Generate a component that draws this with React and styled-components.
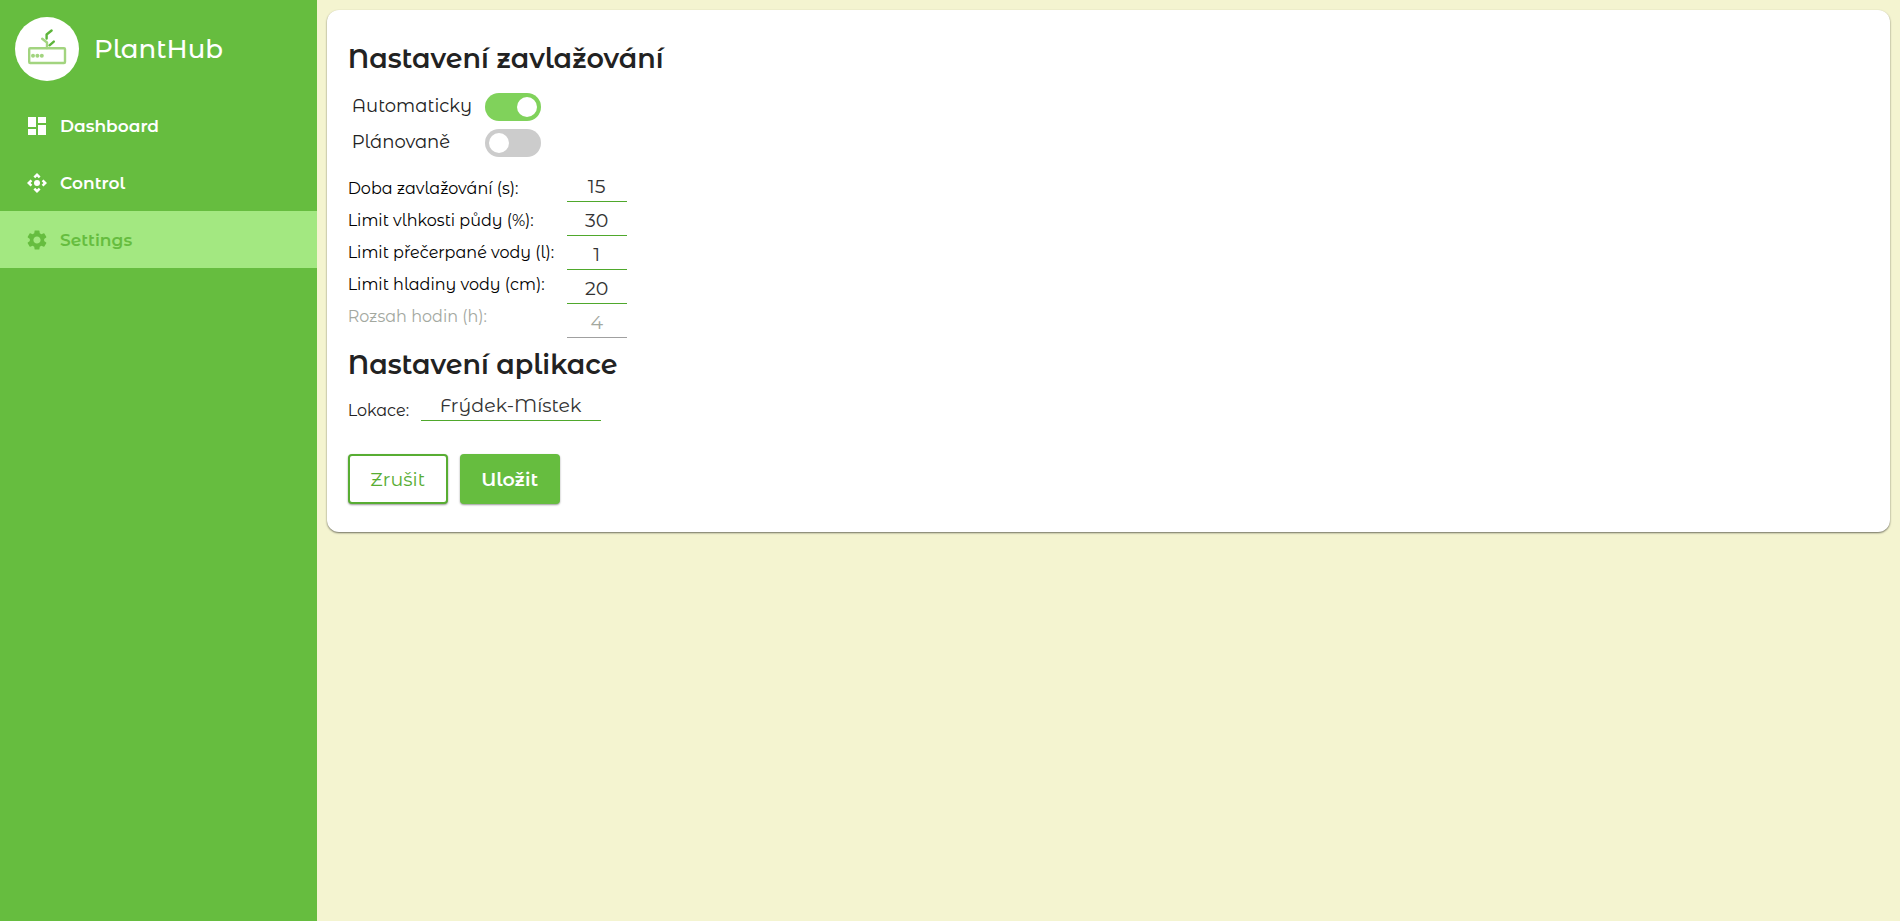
import React, { useState } from "react";
import styled, { createGlobalStyle, css } from "styled-components";
import { MdDashboard, MdControlCamera, MdSettings } from "react-icons/md";

const GlobalStyle = createGlobalStyle`
  *, *::before, *::after { box-sizing: border-box; }
  body {
    margin: 0;
    background: #f4f4d0;
    color: #222;
    font-family: "Montserrat Alternates", Montserrat, Inter, sans-serif;
  }
  input, button { font: inherit; }
`;

const Layout = styled.div`
  display: grid;
  grid-template-columns: 1fr 5fr;
  min-height: 100vh;
`;

const Sidebar = styled.aside`
  background: #66bd3f;
  color: #fff;
`;

const Brand = styled.a`
  display: flex;
  align-items: center;
  gap: 15px;
  padding: 17px 15px 16px;
  color: inherit;
  text-decoration: none;
  font-size: 26px;
  font-weight: 500;
  line-height: 32px;
`;

const LogoCircle = styled.span`
  display: flex;
  width: 64px;
  height: 64px;
  border-radius: 50%;
  background: #fff;
`;

const NavItem = styled.a`
  display: flex;
  align-items: center;
  gap: 11px;
  height: 57px;
  padding: 0 25px;
  font-size: 17px;
  font-weight: 600;
  text-decoration: none;
  color: ${(p) => (p.$active ? "#66bd3f" : "#fff")};
  background: ${(p) => (p.$active ? "#a3e881" : "transparent")};
`;

const Main = styled.main`
  padding: 10px;
`;

const Card = styled.form`
  padding: 30px 21px 28px;
  border-radius: 12px;
  background: #fff;
  box-shadow: 0 1px 2px rgba(0, 0, 0, 0.55);
`;

const Heading = styled.h2`
  margin: 0;
  font-size: 27px;
  font-weight: 600;
  line-height: 38px;
`;

const Switches = styled.div`
  display: flex;
  flex-direction: column;
  gap: 8px;
  padding: 15px 4px 0;
`;

const SwitchRow = styled.div`
  display: grid;
  grid-template-columns: 133px auto;
  justify-content: start;
  font-size: 18px;
  line-height: 26px;
`;

const Switch = styled.input`
  appearance: none;
  display: flex;
  width: 56px;
  height: 28px;
  margin: 0;
  padding: 4px;
  border-radius: 14px;
  background: #ccc;
  cursor: pointer;
  &::before {
    content: "";
    width: 20px;
    height: 20px;
    border-radius: 50%;
    background: #fff;
  }
  &:checked {
    justify-content: flex-end;
    background: #80d25b;
  }
`;

const Limits = styled.div`
  display: flex;
  gap: 12px;
  padding: 15px 0 8px;
`;

const LabelColumn = styled.div`
  display: flex;
  flex-direction: column;
  width: 207px;
  padding-top: 1px;
`;

const FieldColumn = styled.div`
  display: flex;
  flex-direction: column;
  gap: 4px;
`;

const Label = styled.label`
  font-size: 16px;
  line-height: 32px;
  white-space: nowrap;
  color: ${(p) => (p.$muted ? "#a3a89f" : p.$soft ? "#222" : "#000")};
`;

const Field = styled.input`
  width: ${(p) => (p.$wide ? "180px" : "60px")};
  height: 30px;
  padding: 0;
  border: 0;
  border-bottom: 1px solid #4fa82c;
  border-radius: 0;
  outline: 0;
  background: transparent;
  color: #333;
  font-size: 19px;
  text-align: center;
  &:disabled {
    border-color: #a0a0a0;
    color: #a3a89f;
  }
`;

const LocationRow = styled.div`
  display: flex;
  align-items: flex-start;
  gap: 12px;
  padding-top: 7px;
  ${Label} {
    width: 61px;
    padding-top: 4px;
  }
`;

const Actions = styled.div`
  display: flex;
  gap: 12px;
  padding-top: 27px;
`;

const Button = styled.button`
  width: 100px;
  height: 50px;
  padding: 0;
  border: 2px solid #58ad33;
  border-radius: 4px;
  background: #fff;
  color: #58ad33;
  font-size: 19px;
  box-shadow: 0 1px 2px rgba(0, 0, 0, 0.4);
  cursor: pointer;
  ${(p) =>
    p.$primary &&
    css`
      border-color: #66bd3f;
      background: #66bd3f;
      color: #fff;
      font-weight: 600;
    `}
`;

const Logo = () => (
  <LogoCircle>
    <svg width="64" height="64" viewBox="0 0 64 64" fill="none" strokeWidth="2.4" strokeLinecap="round" strokeLinejoin="round" aria-hidden="true">
      <g stroke="#a2d47f">
        <rect x="14.2" y="31.2" width="35.8" height="14.8" rx="1" />
        <path d="M32 31V25.5L27.2 21.8" />
      </g>
      <g fill="#a2d47f">
        <circle cx="18" cy="38.8" r="2" />
        <circle cx="22.4" cy="38.8" r="2" />
        <circle cx="26.8" cy="38.8" r="2" />
      </g>
      <path d="M31.6 21.5V17.5L36.6 13.5M34.5 28.3L38.8 24.6" stroke="#5db53a" />
    </svg>
  </LogoCircle>
);

const pages = [
  { name: "Dashboard", icon: MdDashboard },
  { name: "Control", icon: MdControlCamera },
  { name: "Settings", icon: MdSettings, active: true },
];

const limits = [
  { id: "duration", label: "Doba zavlažování (s):", value: "15" },
  { id: "moisture", label: "Limit vlhkosti půdy (%):", value: "30" },
  { id: "pumped", label: "Limit přečerpané vody (l):", value: "1" },
  { id: "level", label: "Limit hladiny vody (cm):", value: "20" },
  { id: "hours", label: "Rozsah hodin (h):", value: "4", planned: true },
];

export default function App() {
  const [mode, setMode] = useState("auto");
  const isDisabled = (item) => Boolean(item.planned) && mode !== "planned";

  return (
    <Layout>
      <GlobalStyle />
      <Sidebar>
        <Brand href="#">
          <Logo />
          PlantHub
        </Brand>
        <nav>
          {pages.map(({ name, icon: Icon, active }) => (
            <NavItem key={name} href={`#${name.toLowerCase()}`} $active={active}>
              <Icon size={24} />
              {name}
            </NavItem>
          ))}
        </nav>
      </Sidebar>
      <Main>
        <Card onSubmit={(e) => e.preventDefault()}>
          <Heading>Nastavení zavlažování</Heading>
          <Switches>
            <SwitchRow>
              <label htmlFor="auto">Automaticky</label>
              <Switch id="auto" type="checkbox" checked={mode === "auto"} onChange={() => setMode("auto")} />
            </SwitchRow>
            <SwitchRow>
              <label htmlFor="planned">Plánovaně</label>
              <Switch id="planned" type="checkbox" checked={mode === "planned"} onChange={() => setMode("planned")} />
            </SwitchRow>
          </Switches>
          <Limits>
            <LabelColumn>
              {limits.map((item) => (
                <Label key={item.id} htmlFor={item.id} $muted={isDisabled(item)}>
                  {item.label}
                </Label>
              ))}
            </LabelColumn>
            <FieldColumn>
              {limits.map((item) => (
                <Field key={item.id} id={item.id} type="text" defaultValue={item.value} disabled={isDisabled(item)} />
              ))}
            </FieldColumn>
          </Limits>
          <Heading>Nastavení aplikace</Heading>
          <LocationRow>
            <Label htmlFor="location" $soft>Lokace:</Label>
            <Field id="location" type="text" defaultValue="Frýdek-Místek" $wide />
          </LocationRow>
          <Actions>
            <Button type="button">Zrušit</Button>
            <Button type="submit" $primary>Uložit</Button>
          </Actions>
        </Card>
      </Main>
    </Layout>
  );
}
